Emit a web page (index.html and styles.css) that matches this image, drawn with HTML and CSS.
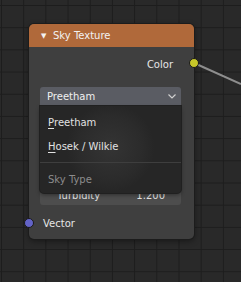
FILE: index.html
```html
<!DOCTYPE html>
<html lang="en">
<head>
  <meta charset="UTF-8">
  <title>Sky Texture</title>
  <link rel="stylesheet" href="styles.css">
</head>
<body>
<div class="editor">
  <svg class="wire" width="241" height="282" viewBox="0 0 241 282">
    <path d="M194 63 L241 84" stroke="#8e8e8e" stroke-width="2" fill="none"/>
  </svg>

  <div class="node">
    <div class="node-header">
      <span class="collapse">&#9660;</span>
      <span class="title">Sky Texture</span>
    </div>

    <div class="node-body">
      <div class="row row-out">
        <span>Color</span>
        <span class="socket socket-color"></span>
      </div>

      <div class="dropdown">
        <span>Preetham</span>
        <svg class="chevron" width="8" height="5" viewBox="0 0 8 5">
          <path d="M0.5 0.5 L4 4 L7.5 0.5" stroke="#d0d0d0" stroke-width="1.2" fill="none"/>
        </svg>
      </div>

      <div class="sun-area"></div>

      <div class="slider">
        <span>Turbidity</span>
        <span>1.200</span>
      </div>

      <div class="row row-in">
        <span class="socket socket-vector"></span>
        <span>Vector</span>
      </div>
    </div>

    <div class="menu">
      <div class="menu-item"><u>P</u>reetham</div>
      <div class="menu-item"><u>H</u>osek / Wilkie</div>
      <div class="menu-sep"></div>
      <div class="menu-title">Sky Type</div>
    </div>
  </div>
</div>
</body>
</html>
```

FILE: styles.css
```css
* {
  box-sizing: border-box;
  margin: 0;
  padding: 0;
}

body {
  width: 241px;
  height: 282px;
  overflow: hidden;
  font-family: 'DejaVu Sans', 'Liberation Sans', sans-serif;
  font-size: 10px;
  color: #e6e6e6;
}

.editor {
  position: relative;
  width: 241px;
  height: 282px;
  background-color: #292929;
  background-image:
    linear-gradient(to right, #1d1d1d 1px, transparent 1px),
    linear-gradient(to bottom, #1d1d1d 1px, transparent 1px);
  background-size: 22.2px 22.2px;
  background-position: 1px 5px;
}

.wire {
  position: absolute;
  left: 0;
  top: 0;
}

.node {
  position: absolute;
  left: 29px;
  top: 24px;
  width: 165px;
  height: 215px;
  background: #3f3f3f;
  border-radius: 5px;
  box-shadow: 0 0 0 1px #1c1c1c, 0 2px 6px rgba(0, 0, 0, 0.45);
}

.node-header {
  height: 23px;
  background: #b0693a;
  border-radius: 5px 5px 0 0;
  display: flex;
  align-items: center;
  padding-left: 12px;
  color: #f2f2f2;
}

.collapse {
  font-size: 7px;
  width: 12px;
}

.node-body {
  padding-top: 6px;
  display: flex;
  flex-direction: column;
}

.row {
  height: 22px;
  display: flex;
  align-items: center;
  position: relative;
}

.row-out {
  justify-content: flex-end;
  padding-right: 21px;
}

.row-in {
  margin-top: 7px;
  padding-left: 14px;
}

.socket {
  position: absolute;
  width: 10px;
  height: 10px;
  border-radius: 50%;
  border: 1px solid #1a1a1a;
}

.socket-color {
  right: -5px;
  top: 5px;
  background: #c7c729;
}

.socket-vector {
  left: -5px;
  top: 6px;
  background: #6363c7;
}

.dropdown {
  margin: 12px 13px 0 11px;
  height: 19px;
  background: #5a5c63;
  border-radius: 3px 3px 0 0;
  display: flex;
  align-items: center;
  justify-content: space-between;
  padding: 0 5px 0 7px;
  color: #f0f0f0;
}

.sun-area {
  height: 80px;
}

.slider {
  margin: 0 13px 0 11px;
  height: 19px;
  background: #4d4d4d;
  border-radius: 3px;
  display: flex;
  align-items: center;
  justify-content: space-between;
  padding: 0 16px 0 17px;
  color: #e6e6e6;
}

.menu {
  position: absolute;
  left: 11px;
  top: 82px;
  width: 141px;
  height: 87px;
  background:
    radial-gradient(circle at 50% 48%, rgba(58, 58, 58, 0.7) 0, rgba(48, 48, 48, 0.5) 32px, rgba(38, 38, 38, 0) 44px),
    #262626;
  border-radius: 0 0 4px 4px;
  box-shadow: 0 0 0 1px #202020, 0 2px 4px rgba(0, 0, 0, 0.4);
  padding-top: 4px;
}

.menu-item {
  height: 24px;
  display: flex;
  align-items: center;
  padding-left: 8px;
  color: #e2e2e2;
}

.menu-item u {
  text-decoration-thickness: 1px;
  text-underline-offset: 2px;
}

.menu-sep {
  margin-top: 4px;
  height: 1px;
  background: #3e3e3e;
}

.menu-title {
  margin-top: 4px;
  height: 24px;
  display: flex;
  align-items: center;
  padding-left: 8px;
  color: #8c8c8c;
}
```
